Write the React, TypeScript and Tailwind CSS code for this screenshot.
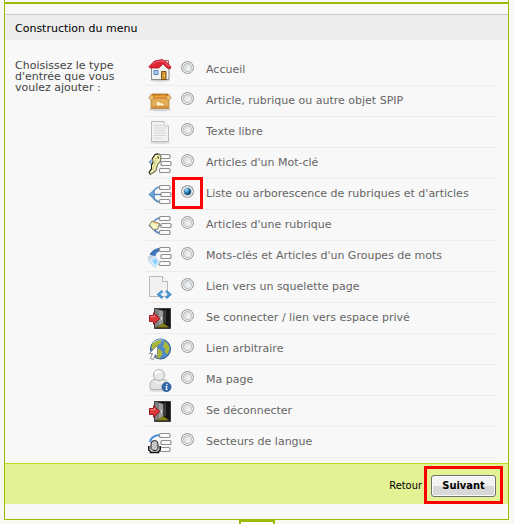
import { useState } from 'react'
import type { JSX, ReactNode } from 'react'


interface IIconProps {
  children: ReactNode;
}

const Icon = ({ children }: IIconProps): JSX.Element => (
  <svg aria-hidden="true" className="size-6 shrink-0" viewBox="0 0 24 24" fill="none">
    {children}
  </svg>
)

const Boxes = (): JSX.Element => (
  <g fill="#fafafa" stroke="#8f8f8f" strokeWidth="1.2">
    <rect x="11.5" y="3.5" width="10.5" height="4" rx="1" />
    <rect x="13" y="10.5" width="10" height="4" rx="1" />
    <rect x="11.5" y="17.5" width="10.5" height="4" rx="1" />
  </g>
)

const BlueTree = (): JSX.Element => (
  <>
    <path d="M11 5Q7 6 4.500 11M13 12.500H5M11 20Q7 19 4.500 14" stroke="#5c8cc4" strokeWidth="1.700" />
    <path d="M.8 12.500 6.500 7.500v10z" fill="#6f9fd2" stroke="#5a8bc4" strokeWidth=".8" />
    <Boxes />
  </>
)

const HomeIcon = (): JSX.Element => (
  <Icon>
    <ellipse cx="12" cy="22.500" rx="10" ry="1.200" fill="#cfcfcf" />
    <path d="M3.500 9h17.500v12.500H3.500z" fill="#f4f4f4" stroke="#8a8a8a" />
    <path d="M17.500 2.500h3V8h-3z" fill="#f3f3f3" stroke="#a33" strokeWidth=".8" />
    <path d="M1 8.500 6.500 3 14 1.500l4 2 5 5.500-1 2-3-1-4-4-4 4H2z" fill="#de2233" stroke="#b01425" strokeWidth=".8" />
    <path d="M5 6.500 7.500 4 14 2.700l3.500 2 4 4.300" stroke="#f4747e" strokeWidth="1" />
    <path d="m11 10.500 4-4 4 4z" fill="#f4f4f4" />
    <path d="M6 12.500h4v4H6z" fill="#a9cdf3" stroke="#5d86bd" />
    <path d="M13.500 13.500h4.500v8h-4.500z" fill="#d39632" stroke="#7b5218" />
    <circle cx="16.500" cy="17.500" r=".7" fill="#fff1a0" />
  </Icon>
)

const BoxIcon = (): JSX.Element => (
  <Icon>
    <ellipse cx="12" cy="20.500" rx="11" ry="1.800" fill="#d2d2d2" />
    <path d="M4 5h16l2 4H2z" fill="#c98024" stroke="#a8701f" strokeWidth=".8" />
    <path d="M5.500 8Q9 5 11 7l5-1 3 2.500H6z" fill="#f8a33c" />
    <path d="M3 9h18v10.500H3z" fill="#e2ac58" stroke="#b98032" strokeWidth=".8" />
    <path d="M3.500 5 .8 9 4 11.500 6 8.500zM20.500 5 23.200 9 20 11.500 18 8.500z" fill="#ecc37a" stroke="#b98032" strokeWidth=".8" />
    <path d="M3.500 17h17v2H3.500z" fill="#cf9340" />
    <path d="m8.500 13.500 2-1 1.500 2 1.500-.5 2.500 2-2 .8-2-.8-1.500 1-1.500-1z" fill="#fff1d1" />
  </Icon>
)

const PageIcon = (): JSX.Element => (
  <Icon>
    <ellipse cx="12" cy="22.500" rx="10.500" ry="1.300" fill="#d8d8d8" />
    <path d="M3.500 1.500h12.500l4.500 4.500v15.500h-17z" fill="#f1f1f1" stroke="#bdbdbd" />
    <path d="M16 1.500V6h4.500" fill="#fff" stroke="#c4c4c4" />
    <path d="M6 5.500h8M6 8h12M6 10.500h11M6 13h12M6 15.500h12M6 18h8" stroke="#d6d6d6" />
  </Icon>
)

const KeyIcon = (): JSX.Element => (
  <Icon>
    <path d="M3 14 .8 11 4 7.500z" fill="#6c9dd0" />
    <Boxes />
    <path
      d="M4.500 7.500 7 3.500l4.500-.5L13 5.500 12.500 10l-3 3.500-1.500 6-2.500 2-3.500 2L1 21l2.500-3.500V14l1.500-2.500z"
      fill="#efedb2"
      stroke="#6c6a48"
      strokeWidth="1.100"
    />
    <path d="m8 7-1.500 6L5 19" stroke="#cfcb7e" strokeWidth="1.200" />
    <path d="M4 8 7 3.500l3-.8M1 22l2.500-4v-4L5 11" stroke="#1c1c1c" />
    <path d="M9.500 5.500H11v2H9.500z" fill="#3e3e2a" />
  </Icon>
)

const TreeIcon = (): JSX.Element => (
  <Icon>
    <BlueTree />
  </Icon>
)

const SectionIcon = (): JSX.Element => (
  <Icon>
    <BlueTree />
    <path d="m1.500 12 2.500-4 2.500 1 5 1.500-1.500 5.500-4.500 1z" fill="#f7f2bd" stroke="#77745a" strokeWidth=".9" />
    <path d="m5 9 4.500 1.500" stroke="#e7a64c" strokeWidth="1.300" />
    <path d="m3.500 12 5 2.500" stroke="#fffde0" />
  </Icon>
)

const TagIcon = (): JSX.Element => (
  <Icon>
    <path d="M11 4.500Q5 5 2 10.500l5 1.500Q7 8.500 11 7z" fill="#3d78bd" stroke="#3568a5" strokeWidth=".8" />
    <Boxes />
    <path d="m.7 12.500 5.500-.5L12 18.500 7 23.500.7 17z" fill="#dcf0fe" stroke="#b3cadb" strokeWidth=".9" />
    <path d="m4 17 3-3 3 4-3 3z" fill="#8fd2ff" />
    <circle cx="3.200" cy="14.500" r="1" fill="#fff" stroke="#999" strokeWidth=".5" />
  </Icon>
)

const SkeletonIcon = (): JSX.Element => (
  <Icon>
    <path d="M1.500 1.500h13l5 5v15h-18z" fill="#f1f1f1" stroke="#bababa" />
    <path d="M14.500 1.500v5h5" fill="#fff" stroke="#b5b5b5" />
    <path d="m14.500 16-4 3.500 4 3.500M18 16l4 3.500-4 3.500" stroke="#3f8fc8" strokeWidth="2.500" />
    <path d="m14 17-2.500 2.500M18.500 17l2.500 2.500" stroke="#8fd0f2" strokeWidth=".7" />
  </Icon>
)

const DoorIcon = (): JSX.Element => (
  <Icon>
    <path d="M6.500 2.500h16v20h-16z" fill="#161616" stroke="#3a3a3a" />
    <path d="m8 21.500 7-4.500 6.500 4.500z" fill="#85801a" />
    <path d="M7 3h2l6 2v12l-8 5z" fill="#7f7f7f" />
    <path d="m11 4 4 1v12l-4 2.500z" fill="#9d9d9d" />
    <path d="m15 5 3-1v13h-3z" fill="#3b3b3b" />
    <path d="M13.500 11v2.500" stroke="#eee" />
    <path d="M1.500 9.500h4V6.800l6.500 5.700-6.500 5.700v-2.700h-4z" fill="#dd3a3e" stroke="#961a20" />
    <path d="M2.500 10.700h4V9" stroke="#f58c8f" />
  </Icon>
)

const GlobeIcon = (): JSX.Element => (
  <Icon>
    <circle cx="12.500" cy="12" r="10" fill="#5489c6" stroke="#2b5891" />
    <path d="M4 6.500Q8 2 12.500 2.500l1 3-3 2-1 4 4 2 1 4-3 4-3-1-1-6-4-3zM15.500 3.500q6 3 6 9l-2 5-3-3 1-3-3-2 2-3z" fill="#a8b83a" />
    <path d="M5 5.500q5-4 11-2.500" stroke="#a9cdf0" />
    <path d="M9.500 8.500V19.500L7.300 17.500l-2 5-3-1 2.200-5H1.200z" fill="#fff" stroke="#777" strokeWidth=".8" />
  </Icon>
)

const UserIcon = (): JSX.Element => (
  <Icon>
    <ellipse cx="11" cy="22.500" rx="10" ry="1.300" fill="#dadada" />
    <path d="M2 20v-4q.5-4.500 5-4.500h8q4.500 0 5 4.500v5.500H4q-2 0-2-1.500z" fill="#e2e2e2" stroke="#b4b4b4" />
    <circle cx="11" cy="7" r="5.500" fill="#e9e9e9" stroke="#b0b0b0" />
    <path d="M7.500 6q1-3 5-2.500" stroke="#fff" strokeWidth="2.200" />
    <path d="m7.500 13.500 3.500 2 4-2" stroke="#fff" />
    <circle cx="18.500" cy="19" r="4.500" fill="#2f68ab" stroke="#1f5190" strokeWidth=".8" />
    <path d="M19 15.700v1.500M17.500 18.500h1.200l-.4 3h1.400" stroke="#fff" strokeWidth="1.200" />
  </Icon>
)

const SectorIcon = (): JSX.Element => (
  <Icon>
    <path d="M11 5Q3 6 2 12" stroke="#4b8cdb" strokeWidth="2" />
    <Boxes />
    <path d="M.8 16v4l1.700 1.500v1h8v-1L12.200 20v-4" fill="#ddd" stroke="#111" strokeWidth="1.500" />
    <path d="M3 14q0-3.500 3.500-3.500T10 14v4.500L8.500 20.500H5l-2-2z" fill="#b9b9b9" stroke="#222" />
    <path d="M5 13v6M7.500 12v7" stroke="#f0f0f0" strokeDasharray="1 1" />
  </Icon>
)

const ENTRIES: { id: string; label: string; icon: () => JSX.Element }[] = [
  { id: 'accueil', label: 'Accueil', icon: HomeIcon },
  { id: 'objet', label: 'Article, rubrique ou autre objet SPIP', icon: BoxIcon },
  { id: 'texte', label: 'Texte libre', icon: PageIcon },
  { id: 'articles_mot', label: "Articles d'un Mot-clé", icon: KeyIcon },
  { id: 'rubriques', label: "Liste ou arborescence de rubriques et d'articles", icon: TreeIcon },
  { id: 'articles_rubrique', label: "Articles d'une rubrique", icon: SectionIcon },
  { id: 'groupes_mots', label: "Mots-clés et Articles d'un Groupes de mots", icon: TagIcon },
  { id: 'squelette', label: 'Lien vers un squelette page', icon: SkeletonIcon },
  { id: 'connecter', label: 'Se connecter / lien vers espace privé', icon: DoorIcon },
  { id: 'lien', label: 'Lien arbitraire', icon: GlobeIcon },
  { id: 'page', label: 'Ma page', icon: UserIcon },
  { id: 'deconnecter', label: 'Se déconnecter', icon: DoorIcon },
  { id: 'secteurs', label: 'Secteurs de langue', icon: SectorIcon },
]

interface IEntryProps {
  entry: (typeof ENTRIES)[number];
  checked: boolean;
  onSelect: (id: string) => void;
}

const Entry = ({ entry, checked, onSelect }: IEntryProps): JSX.Element => (
  <li className="flex h-[31px] items-center border-b border-[#ededed] pl-[3px]">
    <entry.icon />
    <span className="relative ml-[9px] flex pb-[5px]">
      <input
        type="radio"
        id={entry.id}
        name="type_entree"
        checked={checked}
        onChange={() => onSelect(entry.id)}
        className="size-[13px] appearance-none rounded-full border border-[#989999] bg-radial-[at_65%_65%] from-[#f6f6f6] to-[#c6cacd] shadow-[inset_0_0_0_1px_#f4f4f4,inset_0_0_0_2px_#bcbfc2] checked:bg-radial-[at_40%_35%] checked:from-[#8fd8f5] checked:from-5% checked:via-[#17689f] checked:via-35% checked:to-[#0c304d] checked:to-60% checked:shadow-[inset_0_0_0_1px_#f4f4f4,inset_0_0_0_2px_#c3cbd1]"
      />
      {checked && (
        <span className="pointer-events-none absolute -top-[8px] -left-[9px] h-8 w-[31px] border-3 border-[#ff0000]" />
      )}
    </span>
    <label htmlFor={entry.id} className="ml-3 whitespace-nowrap pb-px text-[#666]">
      {entry.label}
    </label>
  </li>
)

const App = (): JSX.Element => {
  const [selected, setSelected] = useState('rubriques')

  return (
    <div className="bg-[#f8f8f2] pr-[5px] pl-1 font-['DejaVu_Sans',Verdana,sans-serif] text-[11px] leading-4">
      <main className="border-x border-b border-[#9dba00] bg-[#f8f8f8]">
        <div className="mb-2.5 h-1 border-b-2 border-[#9dba00]" />
        <form onSubmit={(e) => e.preventDefault()}>
          <h1 className="border-t border-[#cacaca] bg-[#ededed] px-2.5 pt-1.5 pb-[3px] text-black">
            Construction du menu
          </h1>
          <fieldset className="flex pt-[15px] pr-2.5 pb-[5px] pl-2.5">
            <p id="type-legend" className="w-[130px] shrink-0 pt-[5px] pr-5 leading-[11px] text-[#444]">
              Choisissez le type d'entrée que vous voulez ajouter :
            </p>
            <ul role="radiogroup" aria-labelledby="type-legend" className="min-w-0 grow">
              {ENTRIES.map((entry) => (
                <Entry
                  key={entry.id}
                  entry={entry}
                  checked={entry.id === selected}
                  onSelect={setSelected}
                />
              ))}
            </ul>
          </fieldset>
          <div className="flex h-[41px] items-end justify-end border-t border-[#bcdc20] bg-[#e2f294] pr-[5px] font-['DejaVu_Sans_Condensed','DejaVu_Sans',Tahoma,sans-serif] text-black">
            <button type="button" className="mr-0.5 pb-2.5">Retour</button>
            <span className="flex border-3 border-[#ff0000] px-1 pt-[6px] pb-1">
              <button
                type="submit"
                className="h-[22px] w-[65px] rounded-[3px] border border-[#707070] bg-linear-to-b from-[#f3f3f3] from-50% to-[#d8d8d8] to-50% font-bold shadow-[inset_0_0_0_1px_#fafafa]"
              >
                Suivant
              </button>
            </span>
          </div>
        </form>
        <div className="h-[15px]" />
      </main>
      <div className="flex h-1 justify-center overflow-hidden">
        <div className="h-6 w-9 border-2 border-[#9dba00] bg-white" />
      </div>
    </div>
  )
}

export default App
